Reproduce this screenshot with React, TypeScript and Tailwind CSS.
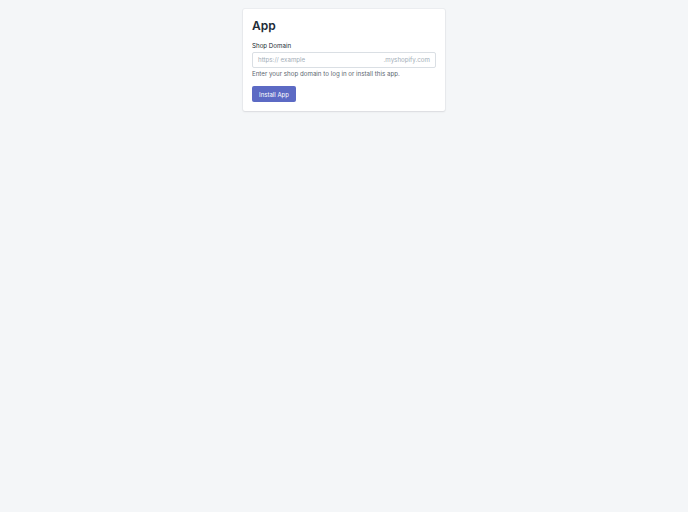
export default function App() {
  return (
    <div className="min-h-[512px] w-full bg-[#f4f6f8] font-['Inter',sans-serif]">
      <div className="flex justify-center pt-[9px]">
        <div className="w-[202px] rounded-[2px] bg-white p-[9px] shadow-[0_0_0_1px_rgba(63,63,68,0.04),0_1px_2px_0_rgba(63,63,68,0.1)]">
          <h1 className="pt-[1px] text-[12px] font-semibold leading-[14px] text-[#212b36]">App</h1>
          <div className="mt-[9px] text-[6.2px] leading-[8px] text-[#212b36]">Shop Domain</div>
          <div className="mt-[2px] flex h-[16px] items-center rounded-[2px] border border-[#dadfe4] bg-white px-[5px] text-[6.2px]">
            <span className="flex-1 text-[#a3adb7]">https:// example</span>
            <span className="text-[#a3adb7]">.myshopify.com</span>
          </div>
          <div className="mt-[2px] text-[6.2px] leading-[8px] text-[#5b6670]">Enter your shop domain to log in or install this app.</div>
          <button className="mt-[8px] flex h-[16px] w-[44px] items-center justify-center rounded-[2px] bg-[#5c6ac4] text-[6px] text-white">
            Install App
          </button>
        </div>
      </div>
    </div>
  );
}
